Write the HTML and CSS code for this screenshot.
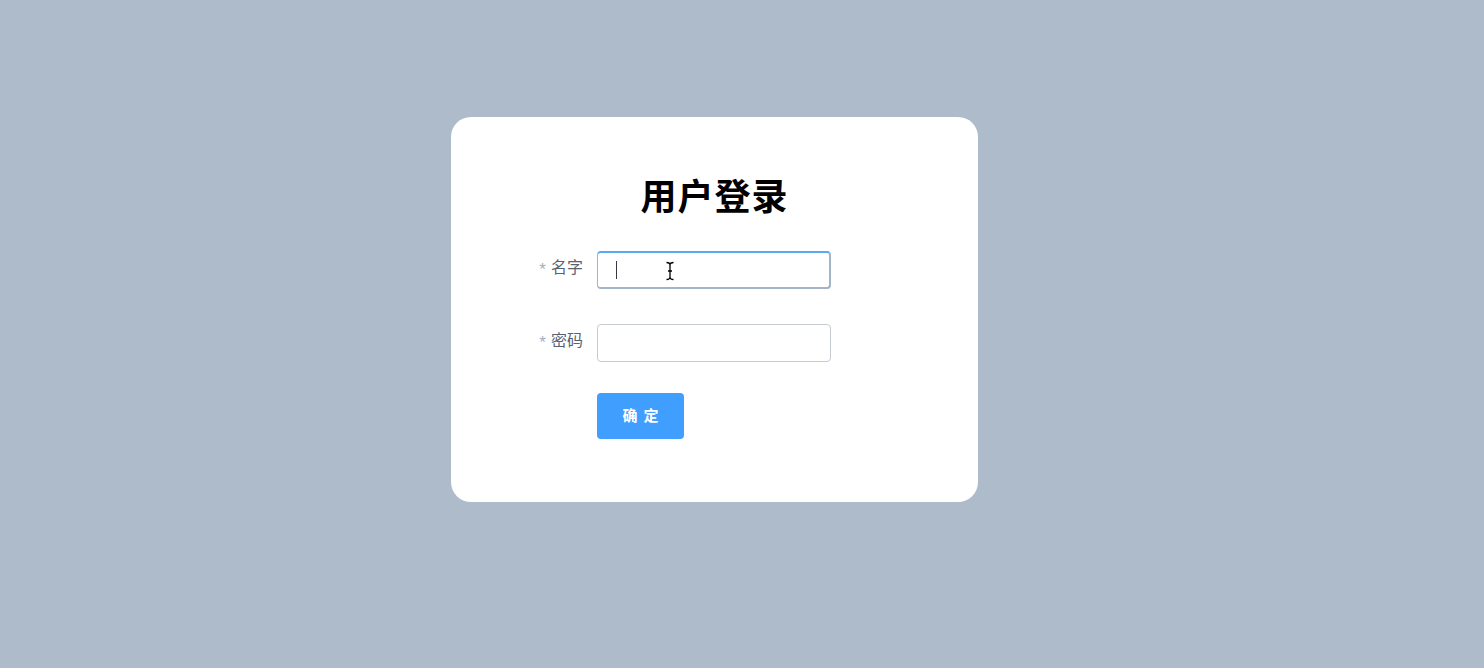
FILE: index.html
```html
<!DOCTYPE html>
<html lang="zh">
<head>
<meta charset="utf-8">
<title>用户登录</title>
<link rel="stylesheet" href="styles.css">
</head>
<body>
<div class="page">
  <div class="card">
    <h1 class="title">用户登录</h1>
    <form class="form">
      <div class="row">
        <label class="label"><span class="star">*</span>名字</label>
        <div class="field">
          <input class="input input-focus" type="text">
          <span class="caret"></span>
          <svg class="ibeam" width="10" height="20" viewBox="0 0 10 20">
            <path d="M1.5 1.5 Q5 1.5 5 4 Q5 1.5 8.5 1.5 M5 4 V16 M1.5 18.5 Q5 18.5 5 16 Q5 18.5 8.5 18.5 M3 10 H7" fill="none" stroke="#000" stroke-width="1.3"/>
          </svg>
        </div>
      </div>
      <div class="row">
        <label class="label"><span class="star">*</span>密码</label>
        <div class="field">
          <input class="input" type="password">
        </div>
      </div>
      <div class="row row-btn">
        <div class="label"></div>
        <button class="btn" type="button">确定</button>
      </div>
    </form>
  </div>
</div>
</body>
</html>
```
FILE: styles.css
```css
html, body {
  margin: 0;
  padding: 0;
  height: 100%;
}
body {
  background: #aebbcb;
  font-family: "Noto Sans CJK SC", "Noto Sans", sans-serif;
}
.page {
  padding-top: 117px;
  padding-left: 451px;
}
.card {
  width: 527px;
  height: 385px;
  box-sizing: border-box;
  background: #fff;
  border-radius: 20px;
  padding: 59px 0 63px 66px;
}
.title {
  margin: 0 0 39px -66px;
  font-size: 36px;
  line-height: 36px;
  font-weight: 700;
  color: #000;
  text-align: center;
  letter-spacing: 1px;
}
.form {
  display: flex;
  flex-direction: column;
}
.row {
  display: flex;
  align-items: center;
  height: 38px;
  margin-bottom: 35px;
}
.row:nth-child(2) {
  margin-bottom: 31px;
}
.row-btn {
  height: 46px;
  margin-bottom: 0;
}
.label {
  width: 80px;
  box-sizing: border-box;
  padding-right: 14px;
  padding-bottom: 4px;
  text-align: right;
  font-size: 16px;
  color: #596273;
  line-height: 34px;
}
.star {
  color: #a3afc0;
  font-family: "Liberation Sans", sans-serif;
  font-size: 17px;
  margin-right: 5px;
  vertical-align: -2px;
}
.field {
  position: relative;
  width: 234px;
  height: 38px;
}
.input {
  display: block;
  width: 100%;
  height: 38px;
  box-sizing: border-box;
  border: 1px solid #c6cad2;
  border-radius: 4px;
  padding: 0 15px;
  font-size: 14px;
  outline: none;
  background: #fff;
}
.input-focus {
  border-color: #a3b3c8;
  border-top-color: #5aa7f2;
  border-width: 2px 2px 2px 1px;
}
.caret {
  position: absolute;
  left: 19px;
  top: 10px;
  width: 1px;
  height: 18px;
  background: #333a44;
}
.ibeam {
  position: absolute;
  left: 68px;
  top: 10px;
}
.btn {
  width: 87px;
  height: 46px;
  background: #409eff;
  border: none;
  border-radius: 4px;
  color: #fff;
  font-family: "Noto Sans CJK SC", sans-serif;
  font-size: 15px;
  font-weight: 700;
  letter-spacing: 6px;
  text-indent: 6px;
  padding: 0 0 4px 0;
}
```
